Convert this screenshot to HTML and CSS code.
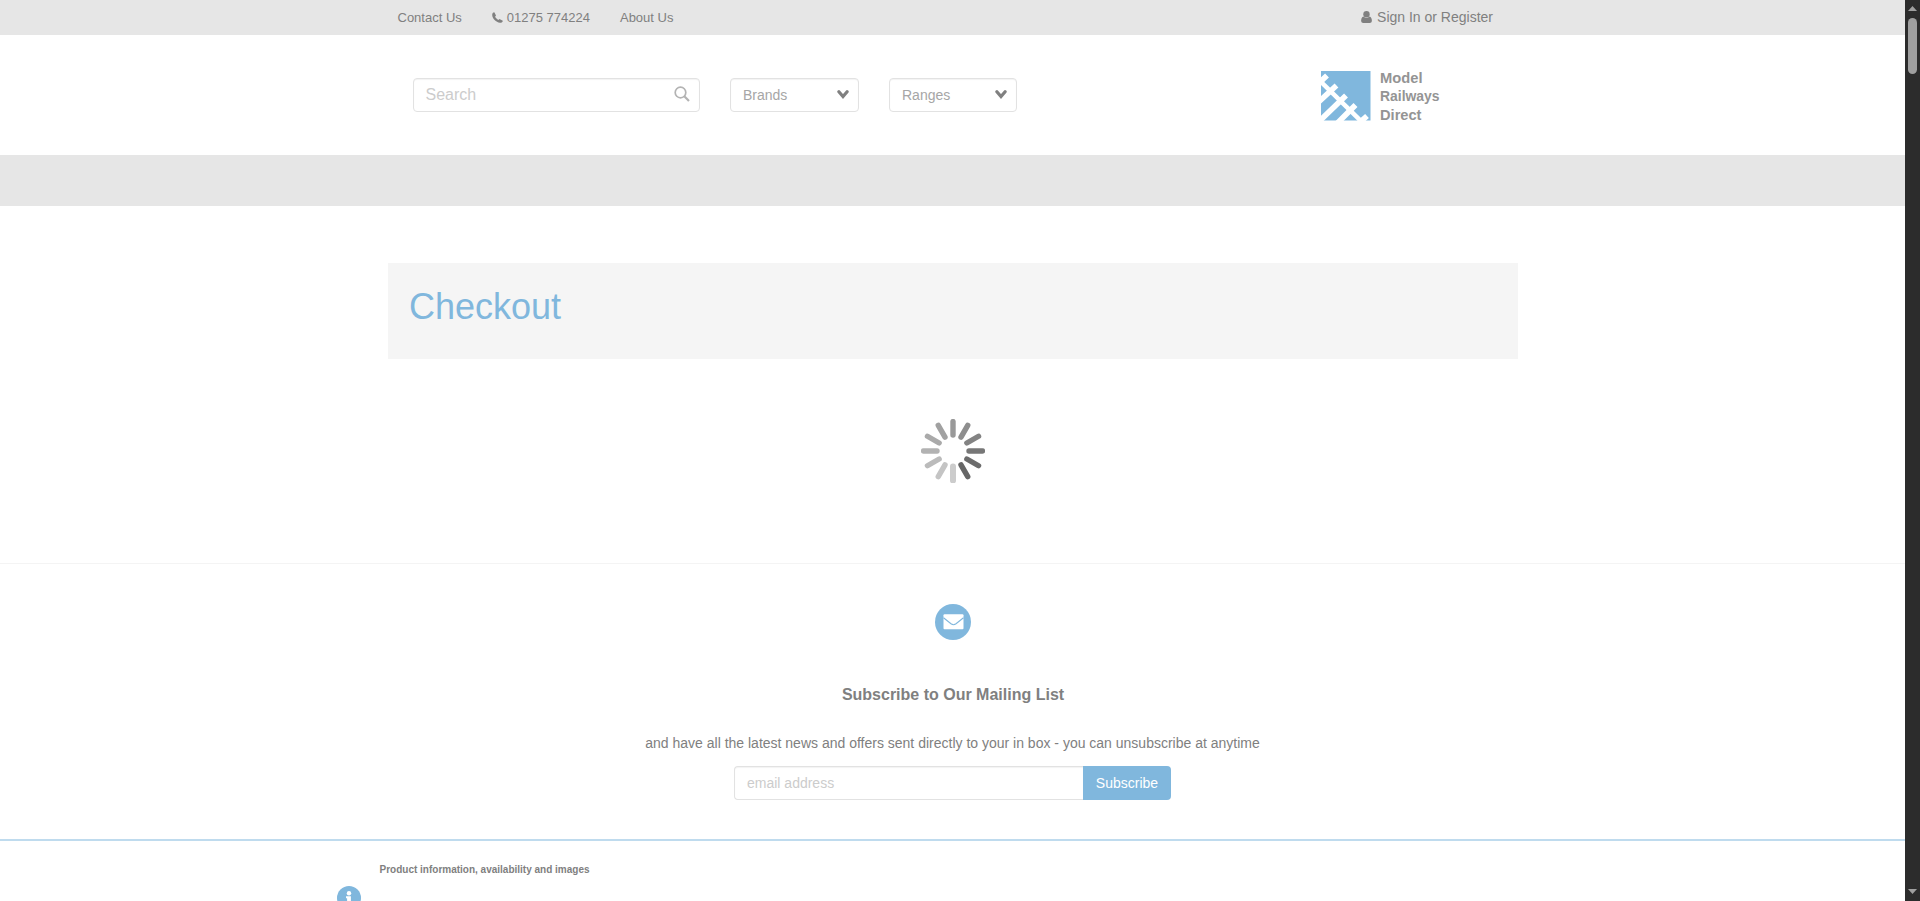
FILE: index.html
```html
<!DOCTYPE html>
<html lang="en">
<head>
<meta charset="utf-8">
<title>Checkout - Model Railways Direct</title>
<link rel="stylesheet" href="styles.css">
</head>
<body>
<div class="page">
  <div class="topbar">
    <nav class="links">
      <a>Contact Us</a>
      <a class="phone"><svg width="11" height="11" viewBox="0 0 11 11"><path d="M2.300.3 4 3.500 3.100 4.700C3.900 6.200 4.900 7.100 6.300 7.900L7.500 7 10.800 8.700C10.700 10.200 9.400 10.800 8 10.700 3.800 10.200.5 6.800.2 3 .2 1.600.9.400 2.300.3Z" fill="#808080"/></svg><span>01275 774224</span></a>
      <a>About Us</a>
    </nav>
    <a class="signin"><svg width="11" height="12" viewBox="0 0 11 12"><circle cx="5.500" cy="3.300" r="3.200" fill="#808080"/><path d="M2.400 5.600Q5.500 8.200 8.600 5.600 10.800 6.200 10.900 10 10.700 12 8.800 12H2.200Q.3 12 .1 10 .2 6.200 2.400 5.600Z" fill="#808080"/></svg><span>Sign In or Register</span></a>
  </div>
  <header class="header">
    <div class="field search"><span>Search</span><svg width="16" height="16" viewBox="0 0 16 16" fill="none" stroke="#b3b3b3"><circle cx="6.500" cy="6.500" r="5.300" stroke-width="1.700"/><path d="M10.300 10.300 15 15" stroke-width="2.200"/></svg></div>
    <div class="field brands"><span>Brands</span><svg width="12" height="9" viewBox="0 0 12 9"><path d="M1.900 1.700 6 6.500 10.100 1.700" fill="none" stroke="#808080" stroke-width="3.200" stroke-linecap="round"/></svg></div>
    <div class="field ranges"><span>Ranges</span><svg width="12" height="9" viewBox="0 0 12 9"><path d="M1.900 1.700 6 6.500 10.100 1.700" fill="none" stroke="#808080" stroke-width="3.200" stroke-linecap="round"/></svg></div>
    <svg class="logo" width="130" height="56" viewBox="0 -2 130 56">
      <svg width="50" height="50" viewBox="0 0 50 50">
        <path d="M0 0H49.500V49.500H0Z" fill="#80b7dd"/>
        <g stroke="#fff" fill="none">
          <path d="M-2 9 42 52" stroke-width="4.500"/>
          <path d="M-2 12 6 4.500M-2 30.500 15.500 14.500M-2 50.500 25 24.500M15 53.500 34.500 34M37 53 46 45" stroke-width="5.600"/>
        </g>
      </svg>
      <g class="logo-text"><text x="59" y="12" textLength="42.500" lengthAdjust="spacingAndGlyphs">Model</text><text x="59" y="30" textLength="59.500" lengthAdjust="spacingAndGlyphs">Railways</text><text x="59" y="48.500" textLength="41.500" lengthAdjust="spacingAndGlyphs">Direct</text></g>
    </svg>
  </header>
  <div class="navband"></div>
  <main class="main">
    <div class="panel"><h1>Checkout</h1></div>
    <svg class="spinner" width="64" height="64" viewBox="-32 -32 64 64" stroke-width="5.400" stroke-linecap="round">
      <path d="M0-29.500V-16" stroke="#999"/>
      <path d="M0-29.500V-16" stroke="#8e8e8e" transform="rotate(30)"/>
      <path d="M0-29.500V-16" stroke="#838383" transform="rotate(60)"/>
      <path d="M0-29.500V-16" stroke="#777" transform="rotate(90)"/>
      <path d="M0-29.500V-16" stroke="#6c6c6c" transform="rotate(120)"/>
      <path d="M0-29.500V-16" stroke="#666" transform="rotate(150)"/>
      <path d="M0-29.500V-15.500" stroke="#ccc" stroke-width="6" transform="rotate(180)"/>
      <path d="M0-29.500V-16" stroke="#c4c4c4" transform="rotate(210)"/>
      <path d="M0-29.500V-16" stroke="#bbb" transform="rotate(240)"/>
      <path d="M0-29.500V-16" stroke="#b2b2b2" transform="rotate(270)"/>
      <path d="M0-29.500V-16" stroke="#aaa" transform="rotate(300)"/>
      <path d="M0-29.500V-16" stroke="#a1a1a1" transform="rotate(330)"/>
    </svg>
  </main>
  <section class="mailing">
    <svg class="mail" width="36" height="36" viewBox="0 0 36 36"><circle cx="18" cy="18" r="18" fill="#80b7dd"/><rect x="8.500" y="10.200" width="20" height="15" rx="1" fill="#fff"/><path d="M8.500 13.800 16 19.800Q18.500 21.600 21 19.800L28.500 13.800" fill="none" stroke="#80b7dd" stroke-width="1.100"/></svg>
    <h2>Subscribe to Our Mailing List</h2>
    <p>and have all the latest news and offers sent directly to your in box - you can unsubscribe at anytime</p>
    <div class="form"><div class="email">email address</div><div class="button">Subscribe</div></div>
  </section>
  <footer class="footer">
    <svg class="info" width="24" height="24" viewBox="0 0 24 24"><circle cx="12" cy="12" r="12" fill="#80b7dd"/><circle cx="12" cy="7.300" r="2.200" fill="#fff"/><path d="M9 10.300H13.900V17H15V19H9V17H10.100V12.300H9Z" fill="#fff"/></svg>
    <h3>Product information, availability and images</h3>
  </footer>
</div>
<div class="scrollbar">
  <svg width="9" height="5" viewBox="0 0 9 5"><path d="M4.500 0 9 5H0Z" fill="#9f9f9f"/></svg>
  <div class="thumb"></div>
  <svg class="down" width="9" height="5" viewBox="0 0 9 5"><path d="M0 0H9L4.500 5Z" fill="#9f9f9f"/></svg>
</div>
</body>
</html>
```
FILE: styles.css
```css
* { box-sizing: border-box; }
body { margin: 0; height: 901px; overflow: hidden; display: flex; background: #fff; color: #808080; font: 14px/20px "Liberation Sans", Arial, sans-serif; }
svg { display: block; flex: none; }
h1, h2, h3, p { margin: 0; white-space: nowrap; }
.page { width: 1905px; height: 901px; overflow: hidden; }
.topbar { height: 35px; background: #e6e6e6; display: flex; justify-content: space-between; padding: 7px 412px 0 397.500px; }
.links { display: flex; font-size: 13px; padding-top: 1px; }
.links a { margin-right: 30px; }
.phone { display: flex; }
.phone svg { margin: 4px 4px 0 0; }
.signin { display: flex; }
.signin svg { margin: 4px 5px 0 0; }
.header { height: 120px; display: flex; padding: 43px 0 0 413px; }
.field { height: 34px; border: 1px solid #e2e2e2; border-radius: 4px; box-shadow: inset 0 1px 1px rgba(0,0,0,.05); display: flex; justify-content: space-between; padding: 6px 9px 0 12px; color: #a6a6a6; }
.search { width: 287px; font-size: 16px; color: #ccc; margin-right: 30px; padding-left: 11.500px; }
.search svg { margin-top: 1px; }
.brands { width: 129px; margin-right: 30px; }
.ranges { width: 128px; }
.brands svg, .ranges svg { margin-top: 5px; }
.logo { margin: -9px 0 0 304px; }
.logo-text { font-weight: bold; font-size: 15px; fill: #949494; }
.navband { height: 51px; background: #e6e6e6; }
.main { height: 358px; padding: 57px 387px 0 388px; border-bottom: 1px solid #f4f4f4; }
.panel { height: 96px; background: #f5f5f5; padding: 24px 21px; }
h1 { font-size: 36px; line-height: 40px; font-weight: normal; color: #80b7dd; }
.spinner { margin: 60px auto 0; }
.mailing { height: 277px; border-bottom: 2px solid #bfdbee; padding-top: 40px; display: flex; flex-direction: column; align-items: center; }
h2 { font-size: 16px; line-height: 20px; margin: 45px 0 0 1px; }
.mailing p { margin-top: 28px; }
.form { display: flex; margin-top: 13px; height: 34px; line-height: 34px; }
.email { width: 349px; border: 1px solid #e2e2e2; border-right: 0; border-radius: 4px 0 0 4px; line-height: 32px; padding-left: 12px; color: #ccc; box-shadow: inset 0 1px 1px rgba(0,0,0,.05); }
.button { width: 88px; text-align: center; color: #fff; background: #80b7dd; border-radius: 0 4px 4px 0; }
.footer { display: flex; padding-left: 337px; }
.info { margin-top: 45px; }
h3 { font-size: 10px; line-height: 12px; margin: 23px 0 0 18.500px; }
.scrollbar { width: 15px; height: 901px; background: #2c2c2c; display: flex; flex-direction: column; align-items: center; padding: 6px 0 7px; }
.thumb { width: 9px; height: 56px; border-radius: 5px; background: #9f9f9f; margin-top: 7px; }
.down { margin-top: auto; }
```
